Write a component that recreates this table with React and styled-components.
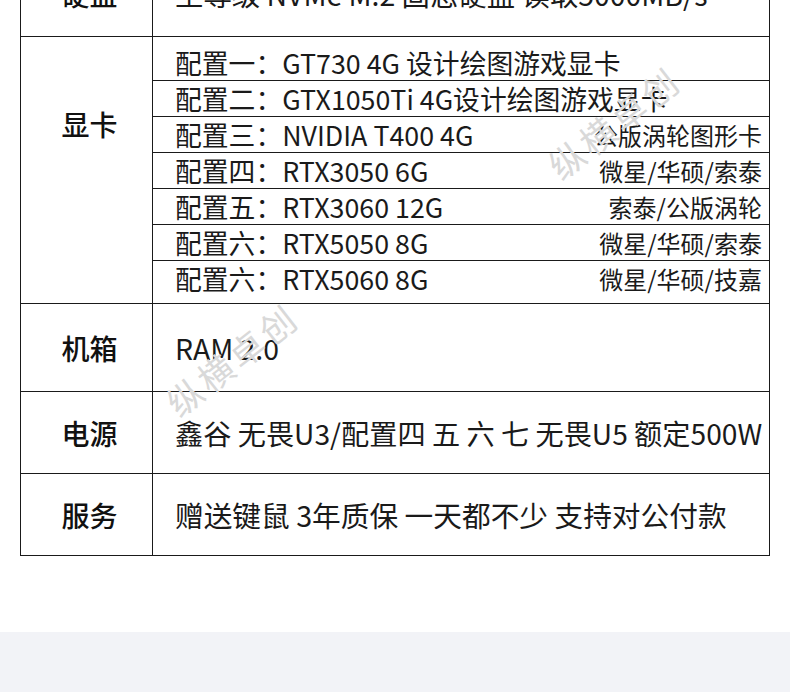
import React from 'react';
import styled, { createGlobalStyle } from 'styled-components';

const Global = createGlobalStyle`
  html, body {
    margin: 0;
    padding: 0;
    background: #ffffff;
    overflow: hidden;
  }
  body {
    font-family: "Noto Sans CJK SC", "Noto Sans", sans-serif;
    color: #1a1a1a;
  }
`;

const Page = styled.div`
  position: relative;
  width: 790px;
  height: 692px;
  display: flex;
  flex-direction: column;
  overflow: hidden;
`;

const Table = styled.div`
  margin: -50px 0 0 20px;
  width: 750px;
  box-sizing: border-box;
  border: 1px solid #1a1a1a;
  display: flex;
  flex-direction: column;
`;

const Row = styled.div`
  display: grid;
  grid-template-columns: 132px 1fr;
  height: ${p => p.h}px;
  border-bottom: ${p => (p.last ? 'none' : '1px solid #1a1a1a')};
`;

const Label = styled.div`
  border-right: 1px solid #1a1a1a;
  display: flex;
  justify-content: center;
  align-items: ${p => (p.top ? 'flex-start' : 'center')};
  padding: ${p => (p.top ? '67px 0 0 6px' : '0 0 0 6px')};
  font-size: 28px;
  font-weight: 500;
  line-height: 40px;
  color: #111;
`;

const Content = styled.div`
  display: flex;
  align-items: center;
  padding-left: 22px;
  font-size: ${p => p.size || 28.4}px;
  line-height: 40px;
  white-space: nowrap;
`;

const SubTable = styled.div`
  display: flex;
  flex-direction: column;
  padding: 8px 0 6px;
`;

const SubRow = styled.div`
  height: 35px;
  display: flex;
  align-items: center;
  justify-content: space-between;
  padding: 0 7px 0 22px;
  border-bottom: ${p => (p.last ? 'none' : '1px solid #1a1a1a')};
  white-space: nowrap;
`;

const SubName = styled.span`
  font-size: 26.8px;
  line-height: 34px;
`;

const SubBrand = styled.span`
  font-size: 24px;
  line-height: 34px;
`;

const Watermark = styled.span`
  position: absolute;
  left: ${p => p.x}px;
  top: ${p => p.y}px;
  font-size: 35px;
  line-height: 35px;
  letter-spacing: 4px;
  color: #d9d9d9;
  transform: rotate(-38deg);
  transform-origin: 0 50%;
  pointer-events: none;
  white-space: nowrap;
`;

const Footer = styled.div`
  margin-top: auto;
  height: 60px;
  background: #f2f3f7;
`;

const gpus = [
  { name: '配置一：GT730 4G 设计绘图游戏显卡', brand: '' },
  { name: '配置二：GTX1050Ti 4G设计绘图游戏显卡', brand: '' },
  { name: '配置三：NVIDIA T400 4G', brand: '公版涡轮图形卡' },
  { name: '配置四：RTX3050 6G', brand: '微星/华硕/索泰' },
  { name: '配置五：RTX3060 12G', brand: '索泰/公版涡轮' },
  { name: '配置六：RTX5050 8G', brand: '微星/华硕/索泰' },
  { name: '配置六：RTX5060 8G', brand: '微星/华硕/技嘉' },
];

export default function App() {
  return (
    <Page>
      <Global />
      <Table>
        <Row h={85}>
          <Label>硬盘</Label>
          <Content>至尊级 NVMe M.2 固态硬盘 读取5000MB/s</Content>
        </Row>
        <Row h={266}>
          <Label top>显卡</Label>
          <SubTable>
            {gpus.map((g, i) => (
              <SubRow key={i} last={i === gpus.length - 1}>
                <SubName>{g.name}</SubName>
                <SubBrand>{g.brand}</SubBrand>
              </SubRow>
            ))}
          </SubTable>
        </Row>
        <Row h={87}>
          <Label>机箱</Label>
          <Content>RAM 2.0</Content>
        </Row>
        <Row h={81}>
          <Label>电源</Label>
          <Content size={28.2}>鑫谷 无畏U3/配置四 五 六 七 无畏U5 额定500W</Content>
        </Row>
        <Row h={81} last>
          <Label>服务</Label>
          <Content size={28.7}>赠送键鼠 3年质保 一天都不少 支持对公付款</Content>
        </Row>
      </Table>
      <Watermark x={552} y={152}>纵横卓创</Watermark>
      <Watermark x={170} y={389}>纵横卓创</Watermark>
      <Footer />
    </Page>
  );
}
